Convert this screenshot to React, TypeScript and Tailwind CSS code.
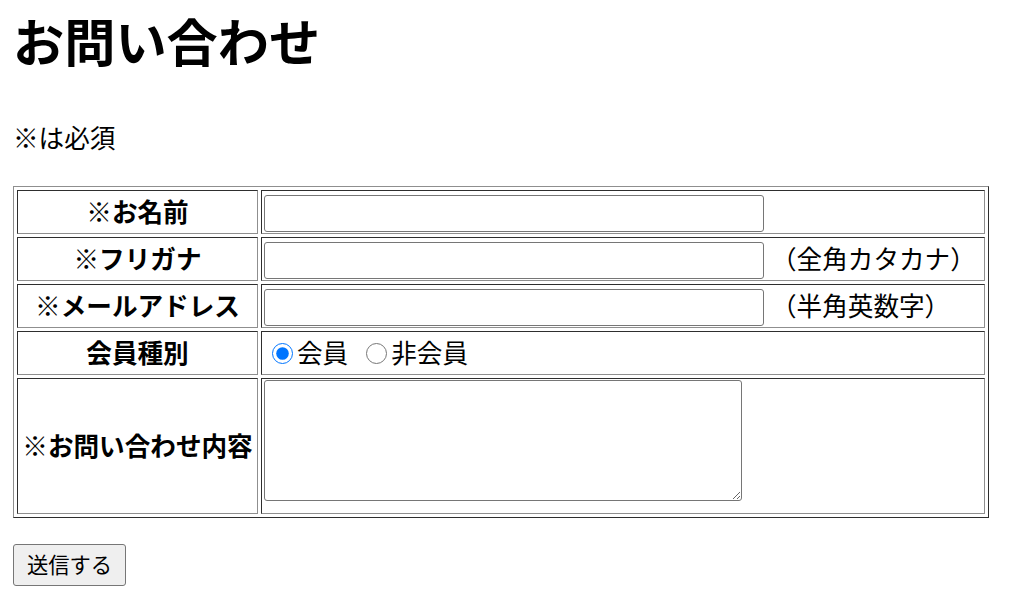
import React from 'react';

const thCls =
  "flex items-center justify-center border border-t-[#2e2e2e] border-l-[#2e2e2e] border-r-[#8f8f8f] border-b-[#8f8f8f] px-[2px] pb-[2px] text-[25.6px] font-bold leading-[30px] whitespace-nowrap";
const tdCls =
  "flex border border-t-[#2e2e2e] border-l-[#2e2e2e] border-r-[#8f8f8f] border-b-[#8f8f8f] px-[2px] text-[25.6px] leading-[30px]";
const inputCls =
  "h-[37px] w-[500px] border border-[#767676] rounded-[3px] bg-white px-[3px] text-[21px] outline-none";

export default function App() {
  return (
    <div className="min-h-screen bg-white p-[13px] font-['Noto_Sans_CJK_JP','Noto_Sans',sans-serif] text-black">
      <h1 className="mt-[1px] text-[51.2px] font-bold leading-[52px]">お問い合わせ</h1>
      <p className="mt-[58px] text-[25.6px] leading-[26px]">※は必須</p>

      <form onSubmit={(e) => e.preventDefault()}>
        <div className="mt-[36px] grid w-fit grid-cols-[241px_724px] grid-rows-[44px_44px_44px_44px_136px] gap-[3px] border border-t-[#8f8f8f] border-l-[#8f8f8f] border-r-[#2e2e2e] border-b-[#2e2e2e] p-[3px]">
          <div className={thCls}>※お名前</div>
          <div className={`${tdCls} items-end`}>
            <input type="text" className={`${inputCls} mb-[1px]`} />
          </div>

          <div className={thCls}>※フリガナ</div>
          <div className={`${tdCls} items-center`}>
            <input type="text" className={`${inputCls} self-end mb-[1px]`} />
            <span className="ml-[7px] mb-[2px]">（全角カタカナ）</span>
          </div>

          <div className={thCls}>※メールアドレス</div>
          <div className={`${tdCls} items-center`}>
            <input type="email" className={`${inputCls} self-end mb-[1px]`} />
            <span className="ml-[7px] mb-[2px]">（半角英数字）</span>
          </div>

          <div className={thCls}>会員種別</div>
          <div className={`${tdCls} items-center`}>
            <label className="flex items-center">
              <input type="radio" name="member" defaultChecked className="ml-[8px] mr-[4px] h-[21px] w-[21px] accent-[#0075ff]" />
              <span className="mb-[2px]">会員</span>
            </label>
            <label className="flex items-center">
              <input type="radio" name="member" className="ml-[18px] mr-[4px] h-[21px] w-[21px] accent-[#0075ff]" />
              <span className="mb-[2px]">非会員</span>
            </label>
          </div>

          <div className={thCls}>※お問い合わせ内容</div>
          <div className={`${tdCls} items-start pt-[1px]`}>
            <textarea className="h-[121px] w-[478px] border border-[#767676] rounded-[3px] bg-white p-[3px] text-[21px] outline-none" />
          </div>
        </div>

        <button
          type="submit"
          className="mt-[26px] h-[42px] w-[113px] rounded-[3px] border border-[#767676] bg-[#efefef] pb-[3px] text-[21.3px] leading-[26px] text-black"
        >
          送信する
        </button>
      </form>
    </div>
  );
}
